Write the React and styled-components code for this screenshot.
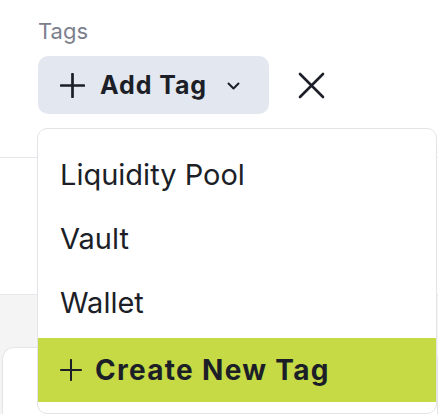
import styled, { createGlobalStyle } from "styled-components"

const GlobalStyle = createGlobalStyle`
  body {
    margin: 0;
    background: #ffffff;
    font-family: Inter, "Open Sans", sans-serif;
    color: #1c1f27;
  }
`

const tags = ["Liquidity Pool", "Vault", "Wallet"]

const PlusIcon = ({ size, stroke }) => (
  <svg width={size} height={size} viewBox="0 0 24 24" fill="none" stroke="currentColor" strokeWidth={stroke} strokeLinecap="round">
    <path d="M12 1v22M1 12h22" />
  </svg>
)

const App = () => {
  return (
    <>
      <GlobalStyle />
      <Page>
        <TopSection>
          <Label>Tags</Label>
          <FieldRow>
            <AddButton>
              <PlusIcon size={25} stroke={2.6} />
              <ButtonText>Add Tag</ButtonText>
              <Chevron width="13" height="8" viewBox="0 0 13 8" fill="none" stroke="currentColor" strokeWidth="2" strokeLinecap="round" strokeLinejoin="round">
                <path d="M1.5 1.5l5 5 5-5" />
              </Chevron>
            </AddButton>
            <ClearButton>
              <svg width="27" height="27" viewBox="0 0 27 27" fill="none" stroke="currentColor" strokeWidth="2.6" strokeLinecap="round">
                <path d="M2 2l23 23M25 2L2 25" />
              </svg>
            </ClearButton>
          </FieldRow>
        </TopSection>
        <MidSection />
        <GraySection>
          <Card />
        </GraySection>

        <Menu>
          {tags.map((t) => (
            <MenuItem key={t}>{t}</MenuItem>
          ))}
          <CreateItem>
            <PlusIcon size={22} stroke={2.2} />
            <span>Create New Tag</span>
          </CreateItem>
        </Menu>
      </Page>
    </>
  )
}

const Page = styled.div`
  position: relative;
  width: 438px;
  height: 414px;
  overflow: hidden;
  display: flex;
  flex-direction: column;
`

const TopSection = styled.div`
  flex: none;
  height: 158px;
  border-bottom: 1px solid #e6e7ea;
  padding: 16px 0 0 38px;
  box-sizing: border-box;
  display: flex;
  flex-direction: column;
  gap: 10px;
`

const Label = styled.div`
  font-size: 22px;
  line-height: 30px;
  color: #7c808d;
`

const FieldRow = styled.div`
  display: flex;
  align-items: center;
  gap: 29px;
`

const AddButton = styled.button`
  width: 231px;
  height: 58px;
  border: none;
  border-radius: 10px;
  background: #e3e7ef;
  color: #1c1f27;
  display: flex;
  align-items: center;
  padding: 0 0 0 22px;
  font-family: inherit;
  cursor: pointer;
`

const ButtonText = styled.span`
  margin-left: 15px;
  font-size: 25px;
  font-weight: 700;
  letter-spacing: 0.9px;
`

const Chevron = styled.svg`
  margin-left: 20px;
  margin-top: 2px;
`

const ClearButton = styled.button`
  border: none;
  background: none;
  padding: 0;
  color: #1c1f27;
  display: flex;
  cursor: pointer;
`

const MidSection = styled.div`
  flex: none;
  height: 137px;
  border-bottom: 1px solid #e6e7ea;
  box-sizing: border-box;
`

const GraySection = styled.div`
  flex: 1;
  min-height: 0;
  background: #f4f4f5;
  padding: 52px 0 0 2px;
`

const Card = styled.div`
  height: 200px;
  background: #ffffff;
  border: 1px solid #e3e4e8;
  border-radius: 12px;
`

const Menu = styled.div`
  position: absolute;
  top: 128px;
  left: 37px;
  width: 400px;
  height: 286px;
  box-sizing: border-box;
  background: #ffffff;
  border: 1px solid #e3e4e8;
  border-radius: 10px;
  padding-top: 13px;
  display: flex;
  flex-direction: column;
`

const MenuItem = styled.div`
  flex: none;
  height: 64px;
  display: flex;
  align-items: center;
  padding-left: 22px;
  font-size: 29px;
  color: #1c1f27;
`

const CreateItem = styled(MenuItem)`
  margin-top: 4px;
  background: #c5da45;
  gap: 13px;
  font-weight: 700;
  font-size: 28px;
  letter-spacing: 1.3px;
`

export default App
